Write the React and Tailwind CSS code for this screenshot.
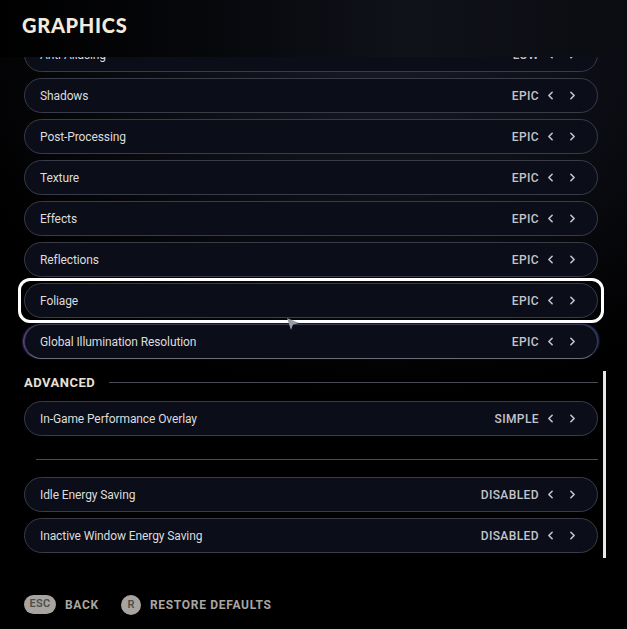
import React from "react";
import { ChevronLeft, ChevronRight } from "lucide-react";

const graphics = [
  { label: "Anti-Aliasing", value: "LOW" },
  { label: "Shadows", value: "EPIC" },
  { label: "Post-Processing", value: "EPIC" },
  { label: "Texture", value: "EPIC" },
  { label: "Effects", value: "EPIC" },
  { label: "Reflections", value: "EPIC" },
  { label: "Foliage", value: "EPIC", focused: true },
  { label: "Global Illumination Resolution", value: "EPIC", glow: true },
];

const Row = ({ label, value, glow }) => (
  <div
    className={`flex h-[35px] items-center justify-between rounded-full border bg-[#0b0d18] pl-[15px] pr-[18px] ${
      glow
        ? "border-[#393c48] border-b-[#6a6c75] shadow-[-2px_0_2px_-1px_rgba(170,90,255,0.85),2px_-1px_2px_-1px_rgba(90,120,255,0.5)]"
        : "border-[#393c48]"
    }`}
  >
    <span className="text-[12px] tracking-[-0.1px] text-[#dcdcdc]">{label}</span>
    <div className="flex items-center text-[#c4c4cc]">
      <span className="text-[12px] font-medium tracking-[0.4px]">{value}</span>
      <ChevronLeft className="ml-[5px] h-[13px] w-[13px]" strokeWidth={3} />
      <ChevronRight className="ml-[9px] h-[13px] w-[13px]" strokeWidth={3} />
    </div>
  </div>
);

export default function App() {
  return (
    <div
      className="relative flex h-[629px] w-[627px] flex-col overflow-hidden bg-[radial-gradient(ellipse_70%_55%_at_62%_8%,#171a26_0%,#0b0c12_55%,#000_100%)]"
      style={{ fontFamily: "Roboto, 'Liberation Sans', sans-serif" }}
    >
      <div className="flex h-[57px] shrink-0 items-center bg-[linear-gradient(90deg,#000_0%,#07080c_35%,#10121a_65%,#0b0c11_100%)] pl-[22px] pb-[8px]">
        <h1
          className="text-[20px] font-black leading-none tracking-[0.7px] text-[#f2eadb]"
          style={{ fontFamily: "Lato, sans-serif" }}
        >
          GRAPHICS
        </h1>
      </div>

      <div className="relative h-[516px] shrink-0 overflow-hidden">
        <div className="-mt-[20px] flex flex-col pl-[24px] pr-[29px]">
          <div className="flex flex-col gap-[6px]">
            {graphics.map((g) =>
              g.focused ? (
                <div
                  key={g.label}
                  className="-mx-[6px] -my-[5px] rounded-[12px] border-[3px] border-white px-[3px] py-[2px]"
                >
                  <Row {...g} />
                </div>
              ) : (
                <Row key={g.label} {...g} />
              )
            )}
          </div>

          <div className="mt-[15px] mb-[10px] flex h-[17px] items-center">
            <span className="text-[13px] font-bold tracking-[0.5px] text-[#e6e1d6]">ADVANCED</span>
            <div className="ml-[14px] h-[1px] flex-1 bg-[#4a4b52]" />
          </div>

          <Row label="In-Game Performance Overlay" value="SIMPLE" />

          <div className="ml-[12px] mt-[23px] mb-[17px] h-[1px] bg-[#4a4b52]" />

          <div className="flex flex-col gap-[6px]">
            <Row label="Idle Energy Saving" value="DISABLED" />
            <Row label="Inactive Window Energy Saving" value="DISABLED" />
          </div>
        </div>

        <div className="absolute right-[21px] top-[314px] h-[187px] w-[3px] bg-[#e8e8e8]" />

        <svg
          className="absolute left-[286px] top-[260px]"
          width="14"
          height="14"
          viewBox="0 0 14 14"
        >
          <path d="M1 1 L13 6 L7 7.5 L5 13 Z" fill="#9a9ca3" />
        </svg>
      </div>

      <div className="flex flex-1 items-start pl-[24px] pt-[22px] text-[12px] font-bold tracking-[0.7px] text-[#a9a6a1]">
        <div className="flex items-center">
          <span className="flex h-[19px] w-[32px] items-center justify-center rounded-full bg-[#a8a5a0] text-[11px] font-semibold tracking-[0.3px] text-[#4f4d4a]">
            ESC
          </span>
          <span className="ml-[9px]">BACK</span>
        </div>
        <div className="ml-[22px] flex items-center">
          <span className="flex h-[20px] w-[20px] items-center justify-center rounded-full bg-[#a8a5a0] text-[11px] font-semibold tracking-normal text-[#4f4d4a]">
            R
          </span>
          <span className="ml-[9px]">RESTORE DEFAULTS</span>
        </div>
      </div>
    </div>
  );
}
